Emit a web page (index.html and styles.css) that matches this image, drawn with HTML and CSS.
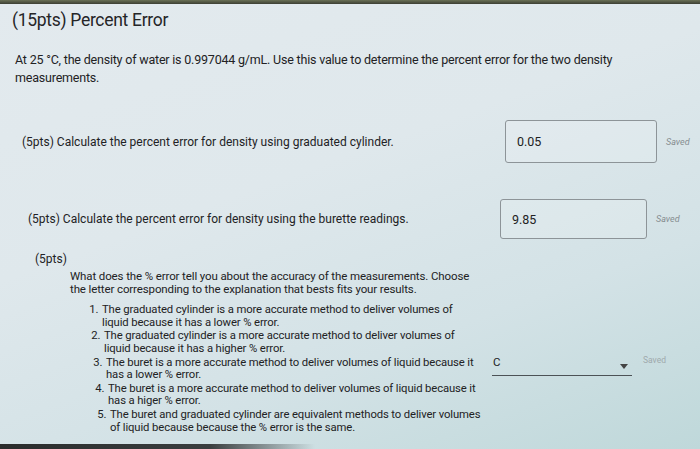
FILE: index.html
```html
<!DOCTYPE html>
<html lang="en">
<head>
<meta charset="utf-8">
<title>Percent Error</title>
<link rel="stylesheet" href="styles.css">
</head>
<body>
<div class="screen">
  <div class="bezel-top"></div>
  <h1 class="title">(15pts) Percent Error</h1>
  <p class="intro">At 25 °C, the density of water is 0.997044 g/mL. Use this value to determine the percent error for the two density<br>measurements.</p>

  <div class="row row1">
    <span class="qtext">(5pts) Calculate the percent error for density using graduated cylinder.</span>
    <div class="box box1">0.05</div>
    <span class="saved">Saved</span>
  </div>

  <div class="row row2">
    <span class="qtext">(5pts) Calculate the percent error for density using the burette readings.</span>
    <div class="box box2">9.85</div>
    <span class="saved">Saved</span>
  </div>

  <div class="q3">
    <div class="pts">(5pts)</div>
    <div class="q3-body">
      <p class="q3-text">What does the % error tell you about the accuracy of the measurements. Choose<br>the letter corresponding to the explanation that bests fits your results.</p>
      <div class="q3-main">
        <ol class="choices">
          <li class="c1">The graduated cylinder is a more accurate method to deliver volumes of<br>liquid because it has a lower % error.</li>
          <li class="c2">The graduated cylinder is a more accurate method to deliver volumes of<br>liquid because it has a higher % error.</li>
          <li class="c3">The buret is a more accurate method to deliver volumes of liquid because it<br>has a lower % error.</li>
          <li class="c4">The buret is a more accurate method to deliver volumes of liquid because it<br>has a higer % error.</li>
          <li class="c5">The buret and graduated cylinder are equivalent methods to deliver volumes<br>of liquid because because the % error is the same.</li>
        </ol>
        <div class="select">
          <span class="sel-val">C</span>
          <svg class="caret" width="8" height="5" viewBox="0 0 8 5"><path d="M0 0h8L4 5z" fill="#444"/></svg>
        </div>
        <span class="saved saved3">Saved</span>
      </div>
    </div>
  </div>
  <div class="bezel-bottom"></div>
</div>
</body>
</html>
```

FILE: styles.css
```css
* { box-sizing: border-box; }
html, body { margin: 0; padding: 0; }
body {
  width: 700px;
  height: 449px;
  overflow: hidden;
  font-family: Roboto, "Liberation Sans", sans-serif;
  color: #222224;
}
.screen {
  width: 700px;
  height: 449px;
  background: linear-gradient(160deg, #e3eaee 0%, #dfe8ec 40%, #d3e2e6 70%, #bfd8da 100%);
  display: flex;
  flex-direction: column;
}
.bezel-top {
  height: 4px;
  background: linear-gradient(180deg, #6a7156 0%, #3c3f34 100%);
  flex: none;
}
.title {
  margin: 6px 0 0 12px;
  font-size: 17.5px;
  font-weight: 400;
  letter-spacing: -0.3px;
  line-height: 20px;
  color: #252527;
}
.intro {
  margin: 21px 0 0 15px;
  font-size: 12.5px;
  line-height: 18px;
  letter-spacing: -0.2px;
}
.row {
  display: flex;
  align-items: center;
}
.qtext {
  font-size: 12px;
  letter-spacing: 0px;
  flex: none;
}
.row1 { margin-top: 33px; padding-left: 22px; }
.row1 .qtext { width: 483px; }
.row2 { margin-top: 36px; padding-left: 28px; }
.row2 .qtext { width: 472px; }
.box {
  flex: none;
  border: 1px solid #8d9498;
  border-radius: 3px;
  background: rgba(255,255,255,0.15);
  font-size: 12.5px;
  padding-left: 11px;
  display: flex;
  align-items: center;
  color: #222;
}
.box1 { width: 152px; height: 43px; }
.box2 { width: 147px; height: 40px; }
.saved {
  font-size: 9px;
  font-style: italic;
  color: #868d90;
  margin-left: 9px;
}
.q3 {
  margin-top: 13px;
  padding-left: 35px;
}
.pts {
  font-size: 12px;
  line-height: 14px;
}
.q3-body {
  padding-left: 35px;
  margin-top: 4px;
}
.q3-text {
  margin: 0;
  font-size: 11.5px;
  line-height: 12.5px;
  letter-spacing: -0.12px;
}
.q3-main {
  display: flex;
  align-items: flex-start;
}
.choices {
  margin: 9px 0 0 0;
  padding-left: 31px;
  width: 420px;
  flex: none;
  font-size: 11.3px;
  line-height: 12.5px;
  letter-spacing: -0.12px;
}
.choices li { margin-bottom: 1.25px; padding-left: 1px; }
.choices .c2 { margin-left: 2px; }
.choices .c3 { margin-left: 4px; }
.choices .c4 { margin-left: 6px; }
.choices .c5 { margin-left: 8px; }
.select {
  margin-top: 61px;
  margin-left: 2px;
  width: 140px;
  height: 20px;
  border-bottom: 1px solid #4c5256;
  display: flex;
  align-items: flex-start;
  justify-content: space-between;
  padding: 0 4px 0 1px;
  flex: none;
}
.sel-val { font-size: 11.5px; line-height: 12px; }
.caret { margin-top: 8px; }
.saved3 {
  margin-top: 60px;
  margin-left: 11px;
  font-style: normal;
  color: #a0a9ac;
  font-size: 8.5px;
}
.bezel-bottom {
  margin-top: auto;
  height: 5px;
  background: linear-gradient(90deg, #2a2c2c 0%, #3a3e3f 30%, rgba(60,70,70,0) 45%);
  flex: none;
}
```
